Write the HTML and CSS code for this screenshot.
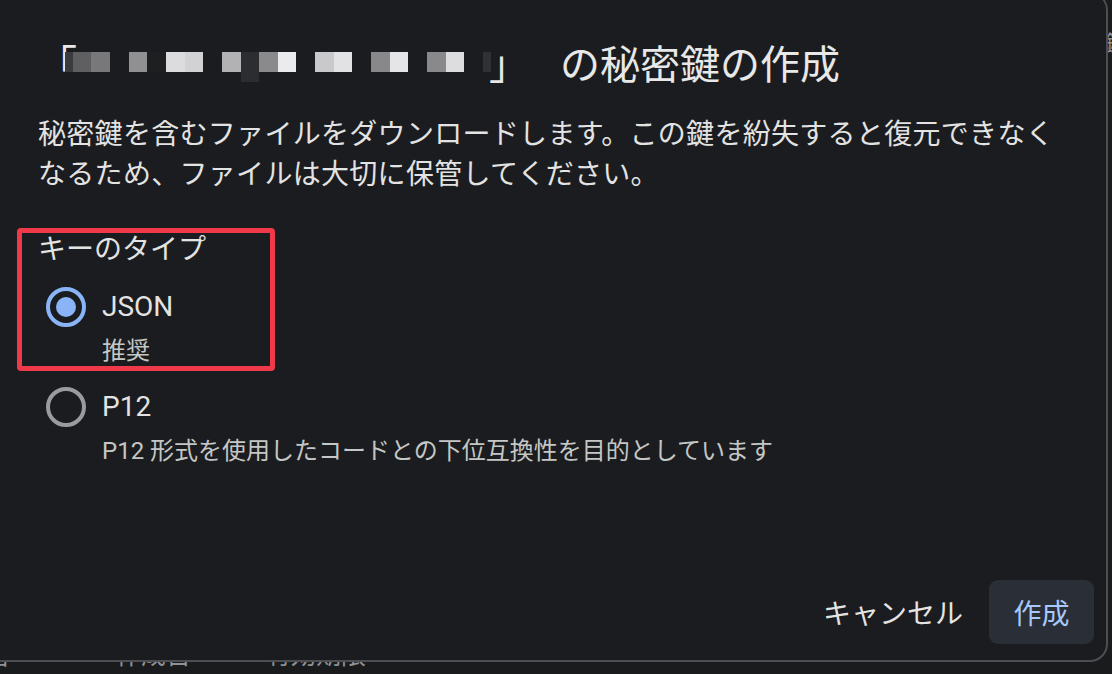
FILE: index.html
```html
<!DOCTYPE html>
<html lang="ja">
<head>
<meta charset="utf-8">
<title>秘密鍵の作成</title>
<link rel="stylesheet" href="styles.css">
</head>
<body>
<div class="page">
  <div class="side-bits"><span>鍵</span></div>
  <div class="table-head">
    <span class="th th-name">名</span>
    <span class="th th-created">作成日</span>
    <span class="th th-expire">有効期限</span>
  </div>
</div>

<div class="dialog" role="dialog">
  <h1 class="title"><span class="open">「</span><span class="name-space"></span><span class="close">」</span><span class="title-rest">の秘密鍵の作成</span></h1>
  <p class="desc">秘密鍵を含むファイルをダウンロードします。この鍵を紛失すると復元できなくなるため、ファイルは大切に保管してください。</p>

  <div class="group">
    <div class="group-label">キーのタイプ</div>
    <label class="option">
      <span class="radio checked"><span class="dot"></span></span>
      <span class="opt-label">JSON</span>
    </label>
    <div class="opt-hint">推奨</div>
    <label class="option option-p12">
      <span class="radio"></span>
      <span class="opt-label">P12</span>
    </label>
    <div class="opt-hint">P12 形式を使用したコードとの下位互換性を目的としています</div>
  </div>

  <div class="actions">
    <button class="btn btn-text">キャンセル</button>
    <button class="btn btn-tonal">作成</button>
  </div>
</div>

<div class="mosaic" aria-hidden="true">
  <span class="c n" style="background:#3a3b3d"></span>
  <span class="c" style="background:#5f5f62"></span>
  <span class="c" style="background:#78787a"></span>
  <span class="c gap"></span>
  <span class="c" style="background:#909092"></span>
  <span class="c" style="background:#1e1f21"></span>
  <span class="c" style="background:#dcdcdf"></span>
  <span class="c" style="background:#d2d2d4"></span>
  <span class="c gap"></span>
  <span class="c" style="background:#b2b2b4"></span>
  <span class="c tall" style="background:#2c2d30"></span>
  <span class="c" style="background:#8a8a8c"></span>
  <span class="c" style="background:#ebebed"></span>
  <span class="c gap"></span>
  <span class="c" style="background:#c9c9cc"></span>
  <span class="c" style="background:#e2e2e4"></span>
  <span class="c gap"></span>
  <span class="c" style="background:#88888a"></span>
  <span class="c" style="background:#e5e5e7"></span>
  <span class="c gap"></span>
  <span class="c" style="background:#89898b"></span>
  <span class="c" style="background:#dddde0"></span>
  <span class="c gap"></span>
  <span class="c n" style="background:#2f3134"></span>
</div>

<div class="highlight" aria-hidden="true"></div>
</body>
</html>
```

FILE: styles.css
```css
* { box-sizing: border-box; }

html, body {
  margin: 0;
  padding: 0;
  width: 1112px;
  height: 674px;
  overflow: hidden;
  background: #1a1b1d;
  font-family: Roboto, "Noto Sans CJK JP", sans-serif;
}

.page {
  position: relative;
  width: 1112px;
  height: 674px;
  color: #9aa0a6;
}

.side-bits {
  display: flex;
  flex-direction: column;
  align-items: flex-end;
  padding-top: 30px;
  font-size: 22px;
  line-height: 28px;
  color: #8f9296;
  margin-right: -15px;
}

.table-head {
  display: flex;
  padding-top: 579px;
  font-size: 25px;
  line-height: 32px;
  font-family: "Noto Sans CJK JP", sans-serif;
  color: #8f9296;
}

.th-name { width: 132px; margin-left: -16px; }
.th-created { width: 150px; }

.dialog {
  position: absolute;
  left: -24px;
  top: -8px;
  width: 1132px;
  height: 670px;
  background: #1b1c1f;
  border: 2px solid #4d4e52;
  border-radius: 18px;
  padding: 44px 12px 16px 57px;
  display: flex;
  flex-direction: column;
  color: #e3e3e3;
}

.title {
  margin: 0 0 0 2px;
  font-weight: 400;
  font-size: 40px;
  line-height: 48px;
  color: #e8e8e8;
  font-family: "Noto Sans CJK JP", sans-serif;
  white-space: nowrap;
}

.name-space {
  display: inline-block;
  width: 412px;
}

.title-rest { margin-left: 31px; }

.desc {
  margin: 26px 0 0 3px;
  font-size: 28px;
  line-height: 40px;
  letter-spacing: 0.3px;
  max-width: 1030px;
  font-family: "Noto Sans CJK JP", sans-serif;
  color: #e3e3e3;
}

.group {
  margin: 35px 0 0 3px;
  display: flex;
  flex-direction: column;
}

.group-label {
  font-size: 28px;
  line-height: 40px;
  font-family: "Noto Sans CJK JP", sans-serif;
  color: #e3e3e3;
}

.option {
  display: flex;
  align-items: center;
  height: 40px;
  margin-top: 20px;
  padding-left: 8px;
  gap: 16px;
}

.option-p12 { margin-top: 20px; }

.radio {
  width: 40px;
  height: 40px;
  border-radius: 50%;
  border: 4px solid #9a9b9e;
  display: flex;
  align-items: center;
  justify-content: center;
  flex: none;
}

.radio.checked { border-color: #8ab4f8; }

.dot {
  width: 20px;
  height: 20px;
  border-radius: 50%;
  background: #8ab4f8;
}

.opt-label {
  font-size: 28px;
  line-height: 40px;
  color: #e3e3e3;
}

.opt-hint {
  margin-top: 8px;
  margin-left: 64px;
  font-size: 24px;
  line-height: 32px;
  color: #c4c7c5;
  font-family: Roboto, "Noto Sans CJK JP", sans-serif;
}

.actions {
  margin-top: auto;
  display: flex;
  justify-content: flex-end;
  align-items: center;
  gap: 2px;
}

.btn {
  border: none;
  background: transparent;
  font-family: "Noto Sans CJK JP", sans-serif;
  font-size: 28px;
  height: 64px;
  padding: 0 24px;
  border-radius: 9px;
  cursor: pointer;
}

.btn-text { color: #e3e3e3; }

.btn-tonal {
  background: #2a2e36;
  color: #a8c7fa;
  width: 105px;
}

.mosaic {
  position: absolute;
  left: 65px;
  top: 52px;
  display: flex;
  align-items: flex-start;
}

.mosaic .c {
  display: block;
  width: 18.67px;
  height: 20px;
}

.mosaic .c.n { width: 7.6px; }
.mosaic .c.tall { height: 30px; }

.highlight {
  position: absolute;
  left: 17px;
  top: 228px;
  width: 258px;
  height: 143px;
  border: 5px solid #f03a4a;
  border-radius: 4px;
}
```
